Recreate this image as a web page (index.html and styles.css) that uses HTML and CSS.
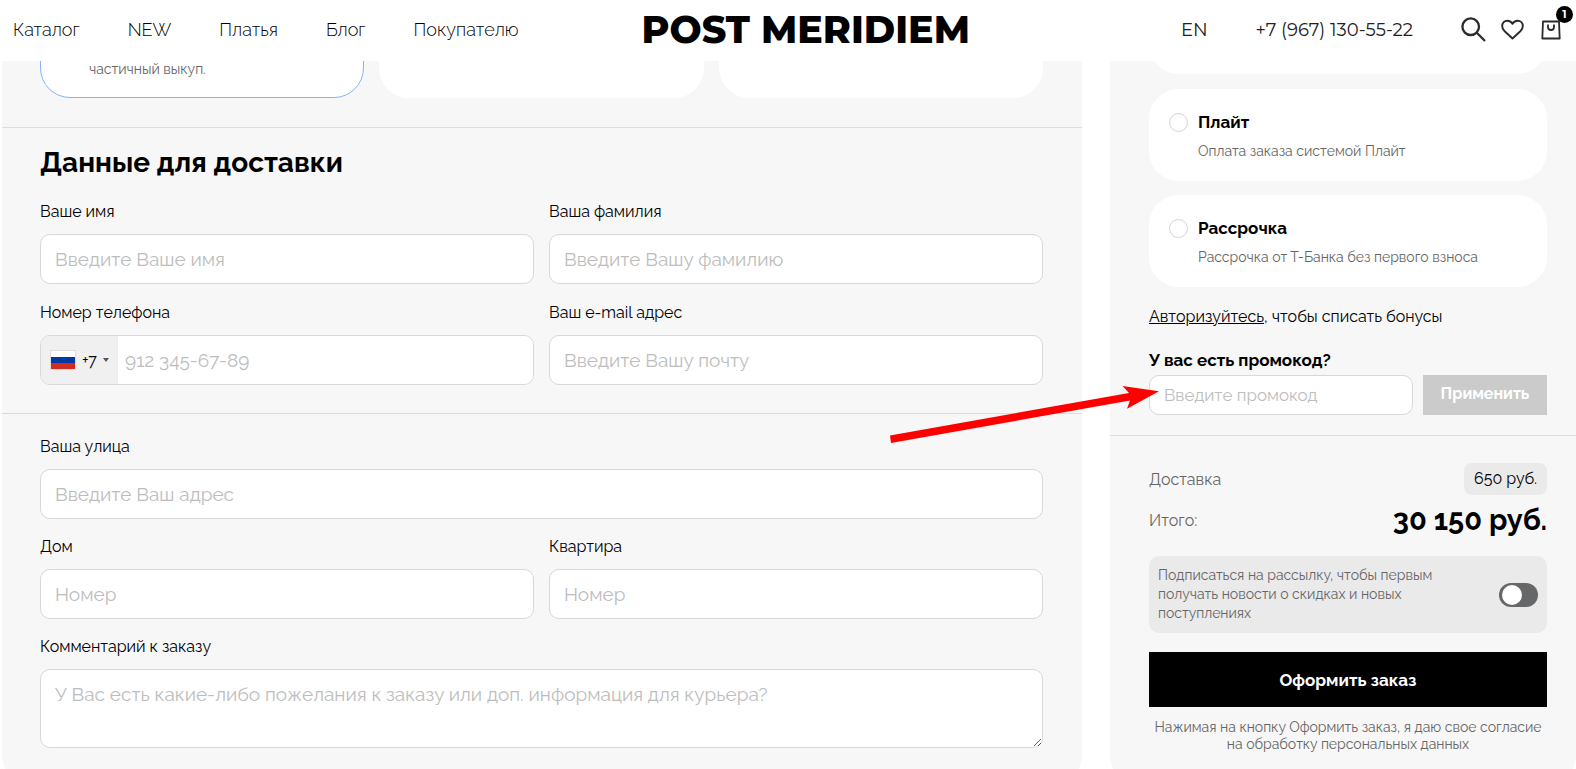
FILE: index.html
```html
<!DOCTYPE html>
<html lang="ru">
<head>
    <meta charset="utf-8">
    <title>POST MERIDIEM - Оформление заказа</title>
    <link rel="stylesheet" href="styles.css">
</head>
<body>
    <header class="header">
        <nav class="nav">
            <a href="#">Каталог</a>
            <a href="#">NEW</a>
            <a href="#">Платья</a>
            <a href="#">Блог</a>
            <a href="#">Покупателю</a>
        </nav>
        <a class="logo" href="#">POST MERIDIEM</a>
        <div class="header-right">
            <a class="lang" href="#">EN</a>
            <a class="phone" href="tel:+79671305522">+7 (967) 130-55-22</a>
            <div class="icons">
                <a href="#" aria-label="Поиск">
                    <svg width="25" height="25" viewBox="0 0 25 25" fill="none" stroke="#2b2b2b" stroke-width="2.3">
                        <circle cx="9.700" cy="9.700" r="8.300"/>
                        <path d="M15.500 15.500l8.500 8.500"/>
                    </svg>
                </a>
                <a href="#" aria-label="Избранное">
                    <svg width="23" height="21" viewBox="0 0 24 22" fill="none" stroke="#2b2b2b" stroke-width="2" stroke-linejoin="round">
                        <path d="M12 20.500L3.500 12.500C1.800 10.800 1.200 9.200 1.200 7.300C1.200 4 3.600 1.800 6.500 1.800C9 1.800 11 3 12 5C13 3 15 1.800 17.500 1.800C20.400 1.800 22.800 4 22.800 7.300C22.800 9.200 22.200 10.800 20.500 12.500Z"/>
                    </svg>
                </a>
                <a class="cart" href="#" aria-label="Корзина">
                    <svg width="20" height="20" viewBox="0 0 20 20" fill="none" stroke="#2b2b2b" stroke-width="1.800" stroke-linejoin="round">
                        <path d="M2 1.500H18L18.700 18.500H1.300Z"/>
                        <path d="M7 4.500V7a3 3 0 0 0 6 0V4.500"/>
                    </svg>
                    <span class="badge">1</span>
                </a>
            </div>
        </div>
    </header>

    <main class="checkout">
        <section class="panel">
            <div class="delivery-cards">
                <div class="delivery-card active">частичный выкуп.</div>
                <div class="delivery-card"></div>
                <div class="delivery-card"></div>
            </div>
            <div class="block">
                <h2>Данные для доставки</h2>
                <div class="fields">
                    <div class="field">
                        <label for="name">Ваше имя</label>
                        <input type="text" id="name" placeholder="Введите Ваше имя">
                    </div>
                    <div class="field">
                        <label for="surname">Ваша фамилия</label>
                        <input type="text" id="surname" placeholder="Введите Вашу фамилию">
                    </div>
                    <div class="field">
                        <label for="tel">Номер телефона</label>
                        <div class="phone-input">
                            <button type="button" class="country">
                                <svg width="26" height="20" viewBox="0 0 26 20">
                                    <rect width="26" height="20" fill="#ddd"/>
                                    <rect x="1" y="1" width="24" height="6" fill="#fff"/>
                                    <rect x="1" y="7" width="24" height="6" fill="#0039a6"/>
                                    <rect x="1" y="13" width="24" height="6" fill="#d52b1e"/>
                                </svg>
                                +7
                                <span class="caret"></span>
                            </button>
                            <input type="tel" id="tel" placeholder="912 345-67-89">
                        </div>
                    </div>
                    <div class="field">
                        <label for="email">Ваш e-mail адрес</label>
                        <input type="email" id="email" placeholder="Введите Вашу почту">
                    </div>
                </div>
            </div>
            <div class="block">
                <div class="fields address">
                    <div class="field wide">
                        <label for="street">Ваша улица</label>
                        <input type="text" id="street" placeholder="Введите Ваш адрес">
                    </div>
                    <div class="field">
                        <label for="house">Дом</label>
                        <input type="text" id="house" placeholder="Номер">
                    </div>
                    <div class="field">
                        <label for="flat">Квартира</label>
                        <input type="text" id="flat" placeholder="Номер">
                    </div>
                    <div class="field wide">
                        <label for="comment">Комментарий к заказу</label>
                        <textarea id="comment" placeholder="У Вас есть какие-либо пожелания к заказу или доп. информация для курьера?"></textarea>
                    </div>
                </div>
            </div>
        </section>

        <aside class="panel sidebar">
            <div class="payment">
                <div class="pay-card first"></div>
                <label class="pay-card">
                    <input type="radio" name="pay">
                    <span class="pay-title">Плайт</span>
                    <span class="pay-text">Оплата заказа системой Плайт</span>
                </label>
                <label class="pay-card">
                    <input type="radio" name="pay">
                    <span class="pay-title">Рассрочка</span>
                    <span class="pay-text">Рассрочка от Т-Банка без первого взноса</span>
                </label>
                <p class="bonus"><a href="#">Авторизуйтесь</a>, чтобы списать бонусы</p>
                <label class="promo-label" for="promo">У вас есть промокод?</label>
                <div class="promo">
                    <input type="text" id="promo" placeholder="Введите промокод">
                    <button type="button">Применить</button>
                    <svg class="arrow" width="272" height="60" viewBox="0 0 272 60">
                        <path d="M1 50.500L240 8L233.500 1L270 6.300L238 23.700L241 15.500L2 58Z" fill="#f00"/>
                    </svg>
                </div>
            </div>
            <div class="summary">
                <div class="sum-row">
                    <span>Доставка</span>
                    <span class="pill">650 руб.</span>
                </div>
                <div class="sum-row total">
                    <span>Итого:</span>
                    <strong>30 150 руб.</strong>
                </div>
                <label class="subscribe">
                    <span>Подписаться на рассылку, чтобы первым получать новости о скидках и новых поступлениях</span>
                    <input type="checkbox" class="switch">
                </label>
                <button type="submit" class="order">Оформить заказ</button>
                <p class="agree">Нажимая на кнопку Оформить заказ, я даю свое согласие на обработку персональных данных</p>
            </div>
        </aside>
    </main>
</body>
</html>
```

FILE: styles.css
```css
* {
    box-sizing: border-box;
}
body {
    margin: 0;
    height: 100vh;
    overflow: hidden;
    font-family: Raleway, Lato, "Open Sans", sans-serif;
    font-size: 16px;
    color: #000;
    background-color: #fff;
}
a {
    color: inherit;
    text-decoration: none;
}
input, textarea, button {
    font-family: inherit;
}
.header {
    position: relative;
    z-index: 2;
    display: flex;
    align-items: center;
    justify-content: space-between;
    height: 61px;
    padding: 0 15px 2px 13px;
    background-color: #fff;
    color: #222;
}
.nav {
    display: flex;
    gap: 48px;
    font-size: 18px;
    font-weight: 300;
    color: #000;
}
.logo {
    margin-right: 88px;
    font-family: Montserrat, "DejaVu Sans", sans-serif;
    font-size: 38px;
    font-weight: 800;
    line-height: 58px;
    color: #000;
}
.header-right {
    display: flex;
    align-items: center;
    font-family: Montserrat, Lato, sans-serif;
    font-size: 18px;
}
.lang {
    margin-right: 48px;
}
.phone {
    margin-right: 48px;
}
.icons {
    display: flex;
    align-items: center;
    gap: 15px;
}
.icons a {
    display: flex;
}
.cart {
    position: relative;
    margin-left: 2px;
}
.badge {
    position: absolute;
    right: -12px;
    top: -14px;
    width: 17px;
    height: 17px;
    border-radius: 50%;
    background-color: #000;
    color: #fff;
    font-size: 11px;
    font-weight: bold;
    line-height: 17px;
    text-align: center;
}
.checkout {
    display: grid;
    grid-template-columns: minmax(0, 1fr) 466px;
    gap: 28px;
    margin-top: -61px;
    padding-left: 2px;
}
.panel {
    background-color: #f7f7f7;
    border-radius: 0 0 30px 30px;
}
.delivery-cards {
    display: grid;
    grid-template-columns: repeat(3, 1fr);
    gap: 15px;
    padding: 0 39px 29px 38px;
}
.delivery-card {
    height: 98px;
    padding: 59px 48px 0;
    border-radius: 30px;
    background-color: #fff;
    font-size: 14px;
    line-height: 19px;
    color: #666;
}
.delivery-card.active {
    border: 1px solid #82b4f8;
}
.block {
    padding: 19px 39px 28px 38px;
    border-top: 1px solid #dcdcdc;
}
.block:last-child {
    padding-bottom: 37px;
}
h2 {
    margin: 0 0 21px;
    font-size: 28px;
    line-height: 32px;
}
.fields {
    display: grid;
    grid-template-columns: 1fr 1fr;
    gap: 17px 15px;
}
.address {
    padding-top: 2px;
    row-gap: 16px;
}
.wide {
    grid-column: 1 / 3;
}
.field label {
    display: block;
    margin-bottom: 10px;
    line-height: 24px;
}
.field input, .field textarea {
    display: block;
    width: 100%;
    height: 50px;
    padding: 0 14px;
    border: 1px solid #d8d8d8;
    border-radius: 10px;
    background-color: #fff;
    font-size: 19px;
    outline: none;
}
.field textarea {
    height: 79px;
    padding: 12px 14px;
    line-height: 24px;
}
::placeholder {
    color: #bdbdbd;
    opacity: 1;
}
.phone-input {
    display: flex;
    height: 50px;
    border: 1px solid #d8d8d8;
    border-radius: 10px;
    background-color: #fff;
    overflow: hidden;
}
.country {
    display: flex;
    flex: none;
    align-items: center;
    gap: 6px;
    width: 77px;
    padding: 0 0 0 9px;
    border: none;
    background-color: #f0f0f0;
    font-size: 16px;
    color: #000;
}
.caret {
    border-left: 3px solid transparent;
    border-right: 3px solid transparent;
    border-top: 4px solid #555;
}
.field .phone-input input {
    height: 48px;
    padding: 0 7px;
    border: none;
    border-radius: 0;
}
.payment {
    padding: 0 29px 20px 39px;
    border-bottom: 1px solid #dcdcdc;
}
.pay-card {
    display: grid;
    grid-template-columns: 19px 1fr;
    column-gap: 10px;
    row-gap: 6px;
    height: 92px;
    margin-bottom: 14px;
    padding: 21px 20px;
    border-radius: 30px;
    background-color: #fff;
}
.pay-card.first {
    height: 74px;
    margin-bottom: 15px;
}
.pay-card input {
    appearance: none;
    width: 19px;
    height: 19px;
    margin: 3px 0;
    border: 1px solid #d5d5d5;
    border-radius: 50%;
}
.pay-title {
    font-size: 17px;
    font-weight: bold;
    line-height: 25px;
}
.pay-text {
    grid-column: 2;
    font-size: 14px;
    line-height: 20px;
    color: #666;
}
.bonus {
    margin: 18px 0 19px;
    line-height: 24px;
}
.bonus a {
    text-decoration: underline;
}
.promo-label {
    display: block;
    margin-bottom: 3px;
    font-size: 17px;
    font-weight: bold;
    line-height: 24px;
}
.promo {
    position: relative;
    display: flex;
    gap: 10px;
}
.promo input {
    flex: 1;
    min-width: 0;
    height: 40px;
    padding: 0 14px;
    border: 1px solid #d8d8d8;
    border-radius: 10px;
    font-size: 17px;
}
.promo button {
    width: 124px;
    padding: 0 0 4px;
    border: none;
    background-color: #cbcbcb;
    color: #fff;
    font-size: 16px;
    font-weight: bold;
}
/* points at the promo code field */
.arrow {
    position: absolute;
    left: -260px;
    top: 10px;
}
.summary {
    padding: 27px 29px 27px 39px;
}
.sum-row {
    display: flex;
    align-items: center;
    justify-content: space-between;
    color: #666;
}
.pill {
    padding: 0 10px;
    border-radius: 8px;
    background-color: #eaeaea;
    color: #000;
    line-height: 32px;
}
.total {
    margin: 7px 0 18px;
}
.total strong {
    font-size: 29px;
    line-height: 36px;
    color: #000;
}
.subscribe {
    display: flex;
    align-items: center;
    justify-content: space-between;
    padding: 10px 9px;
    border-radius: 10px;
    background-color: #eaeaea;
    font-size: 14px;
    line-height: 19px;
    color: #666;
}
.subscribe span {
    width: 300px;
}
.switch {
    appearance: none;
    display: flex;
    align-items: center;
    width: 39px;
    height: 24px;
    margin: 0;
    padding: 0 3px;
    border-radius: 12px;
    background-color: #666769;
}
.switch::before {
    content: "";
    width: 20px;
    height: 20px;
    border-radius: 50%;
    background-color: #fff;
}
.switch:checked {
    justify-content: flex-end;
}
.order {
    display: block;
    width: 100%;
    height: 55px;
    margin: 19px 0 12px;
    border: none;
    background-color: #000;
    color: #fff;
    font-size: 17px;
    font-weight: bold;
    cursor: pointer;
}
.agree {
    margin: 0;
    font-size: 14px;
    line-height: 17px;
    text-align: center;
    color: #666;
}
```
